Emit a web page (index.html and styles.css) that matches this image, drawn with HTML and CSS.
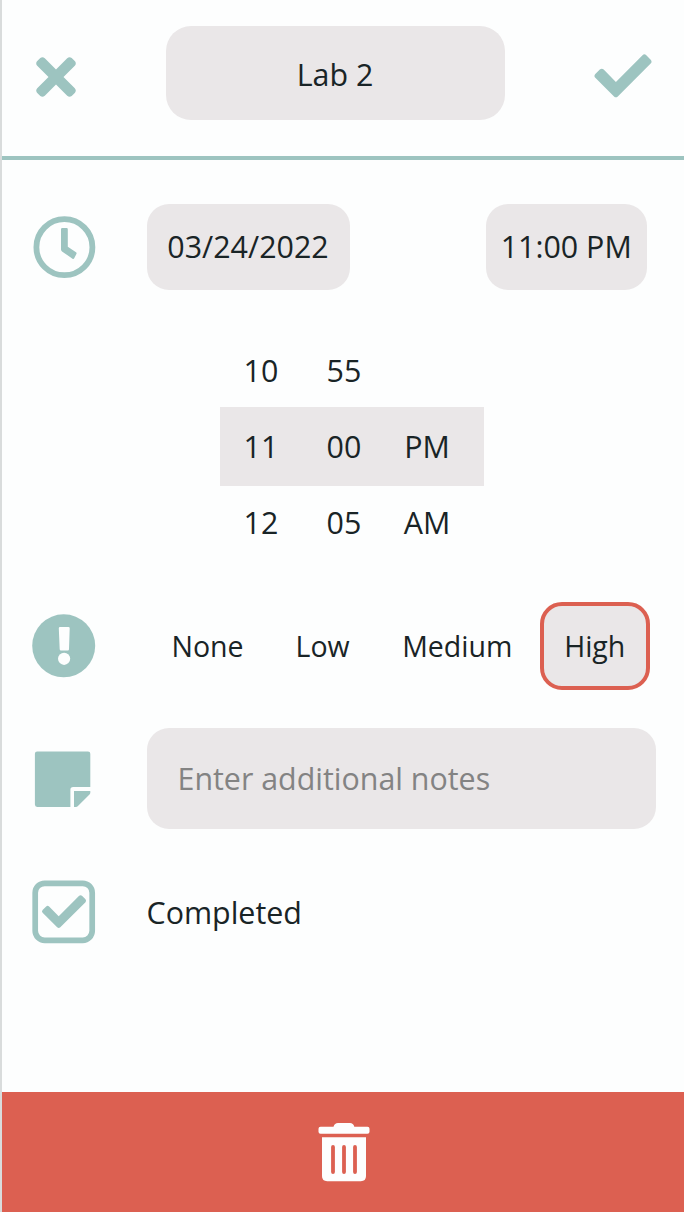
FILE: index.html
```html
<!DOCTYPE html>
<html lang="en">
<head>
<meta charset="utf-8">
<title>Lab 2</title>
<link rel="stylesheet" href="styles.css">
</head>
<body>
<div class="screen">
  <header class="header">
    <svg class="close" viewBox="0 0 40 40"><path class="solid" d="M4.300 1Q6.500-.7 8.800 1.200L20 12.500 31.200 1.200Q33.500-.7 35.700 1L39 4.300Q40.700 6.500 38.800 8.800L27.500 20 38.800 31.200Q40.700 33.500 39 35.700L35.700 39Q33.500 40.700 31.200 38.800L20 27.500 8.800 38.800Q6.500 40.700 4.300 39L1 35.700Q-.7 33.500 1.200 31.200L12.500 20 1.200 8.800Q-.7 6.500 1 4.300Z"/></svg>
    <div class="field title">Lab 2</div>
    <svg class="confirm" viewBox="0 0 58 44"><path class="solid" d="M48.500 1.200Q50.400-.6 52.300 1.200L56.700 5.700Q58.400 7.700 56.700 9.600L23.800 42.500Q21.900 44.200 20 42.500L1.300 23.800Q-.4 21.900 1.300 20L5.800 15.600Q7.800 14 9.700 15.600L21.900 27.900Z"/></svg>
  </header>

  <main>
    <section class="row when">
      <svg class="icon" viewBox="32 215 64 64"><circle class="line" cx="64.400" cy="247.200" r="28" stroke-width="5.800"/><path class="solid" d="M62.200 228H66.600Q67.800 228 67.800 229.200V246.800L76 252.300Q77 253 76.400 254L74.200 258.200Q73.600 259.400 72.500 258.700L62 251.400Q61 250.700 61 249.500V229.200Q61 228 62.200 228Z"/></svg>
      <div class="field date">03/24/2022</div>
      <div class="field time">11:00 PM</div>
    </section>

    <section class="picker">
      <div class="choices above"><span>10</span><span>55</span><span></span></div>
      <div class="choices current"><span>11</span><span>00</span><span>PM</span></div>
      <div class="choices below"><span>12</span><span>05</span><span>AM</span></div>
    </section>

    <section class="row priority">
      <svg class="icon" viewBox="32 614 64 64"><circle class="solid" cx="63.700" cy="645.800" r="31.500"/><path class="mark" d="M60 627H68.400Q69.700 627 69.700 628.300L69 649.200Q69 650.600 67.700 650.600H61Q59.700 650.600 59.700 649.200L58.800 628.300Q58.800 627 60 627Z"/><circle class="mark" cx="64.100" cy="658.800" r="6.100"/></svg>
      <span class="level none">None</span>
      <span class="level low">Low</span>
      <span class="level medium">Medium</span>
      <span class="level high">High</span>
    </section>

    <section class="row notes">
      <svg class="icon" viewBox="32 746 64 64"><path class="solid" d="M37.200 751.500H88Q90.300 751.500 90.300 753.800V786.900H73.200Q70.400 786.900 70.400 789.700V806.900H37.200Q34.900 806.900 34.900 804.600V753.800Q34.900 751.500 37.200 751.500ZM74 791H90.300V793Q90.100 793.800 89.500 794.400L77.700 806.200Q77 806.900 76 806.900H74Z"/></svg>
      <div class="field note">Enter additional notes</div>
    </section>

    <section class="row completed">
      <svg class="icon" viewBox="32 880 64 64"><rect class="line" x="35.200" y="883.300" width="57" height="57" rx="9.500" stroke-width="5.700"/><path class="solid" d="M78.900 896.100Q80.600 894.600 82.200 896.100L85.500 899.300Q86.700 900.700 85.500 902.200L60.300 927.300Q58.700 928.600 57.200 927.300L42.600 912.800Q41.300 911.400 42.600 909.900L46.200 906.400Q47.600 905.300 49.100 906.400L58.700 916.200Z"/></svg>
      <span class="label">Completed</span>
    </section>
  </main>

  <footer class="footer">
    <svg class="trash" viewBox="0 0 52 60"><path d="M2.500 4.700H15.500Q16.600 1 20 1H32Q35.300 1 36.300 4.700H49.500Q51.500 4.700 51.500 6.700V9.800Q51.500 11.800 49.500 11.800H2.500Q.5 11.800.5 9.800V6.700Q.5 4.700 2.500 4.700Z"/><path d="M4 15.200H48V54Q48 59.200 42.800 59.200H9.200Q4 59.200 4 54Z"/><path class="slot" d="M15 25V50M26 25V50M37 25V50"/></svg>
  </footer>
</div>
</body>
</html>
```
FILE: styles.css
```css
* { box-sizing: border-box; }

body {
  margin: 0;
  background: #fdfefe;
  color: #192426;
  font: 30.4px/42px "Open Sans", "Noto Sans", sans-serif;
}

.screen {
  display: flex;
  flex-direction: column;
  height: 1212px;
  border-left: 2px solid #d9dcdc;
}

svg { flex: none; display: block; }
.solid { fill: #9dc4c0; }
.line { fill: none; stroke: #9dc4c0; }
.mark { fill: #fdfefe; }

.field {
  display: flex;
  align-items: center;
  justify-content: center;
  flex: none;
  background: #eae7e8;
  border-radius: 22px;
  white-space: nowrap;
}

.header {
  display: flex;
  align-items: flex-start;
  flex: none;
  height: 159.500px;
  padding-top: 25.500px;
  border-bottom: 4px solid #9dc4c0;
}

.close { width: 40px; height: 40px; margin: 31px 0 0 34px; }
.title { width: 339px; height: 94px; margin-left: 89.500px; border-radius: 25px; padding-top: 4px; }
.confirm { width: 58px; height: 44px; margin: 28px 0 0 89.500px; }

main { flex: 1; }
.row { display: flex; align-items: center; padding-left: 30px; }
.icon { width: 64px; height: 64px; margin-right: 50.500px; }

.when { height: 86px; margin-top: 44px; }
.date, .time { height: 86px; padding-top: 1px; }
.date { width: 203px; }
.time { width: 161.500px; margin-left: 136px; }

.picker { width: 264.500px; margin: 41.500px 0 0 217.500px; }
.choices {
  display: grid;
  grid-template-columns: repeat(3, 83px);
  align-items: center;
  height: 76px;
  text-align: center;
}
.above { height: 75.500px; padding-top: 5px; }
.current { height: 79px; padding-top: 2px; background: #eae7e8; }
.below { padding-bottom: 1px; }

.priority { height: 88px; margin-top: 40px; font-size: 28.500px; }
.level { flex: none; }
.none { margin-left: 25px; }
.low { margin-left: 52px; }
.medium { margin-left: 52.500px; }
.high {
  display: flex;
  align-items: center;
  justify-content: center;
  width: 110.500px;
  height: 88px;
  margin-left: auto;
  margin-right: 34px;
  border: 4px solid #dc6051;
  border-radius: 22px;
  background: #eae7e8;
}

.notes { height: 101.500px; margin-top: 38px; }
.note { width: 509.500px; height: 101.500px; padding: 2px 0 0 31px; justify-content: flex-start; color: #838383; }

.completed { height: 64px; margin-top: 51px; }
.label { padding-top: 1px; }

.footer {
  display: flex;
  justify-content: center;
  flex: none;
  height: 120px;
  padding-top: 30px;
  background: #dc6051;
}
.trash { width: 52px; height: 60px; margin-left: 2px; fill: #fdfefe; }
.slot { fill: none; stroke: #dc6051; stroke-width: 3.800px; stroke-linecap: round; }
```
